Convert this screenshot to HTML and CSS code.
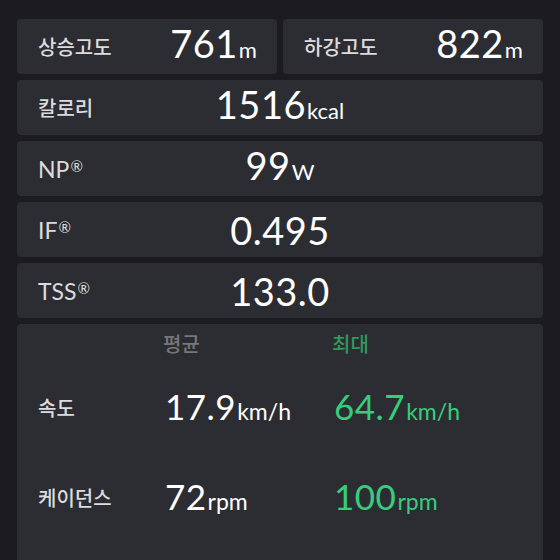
FILE: index.html
```html
<!DOCTYPE html>
<html lang="ko">
<head>
    <meta charset="UTF-8">
    <title>Ride Summary</title>
    <link rel="stylesheet" href="styles.css">
</head>
<body>
    <div class="stats">
        <div class="pair">
            <div class="card half">
                <span class="label">상승고도</span>
                <span class="value">761<small>m</small></span>
            </div>
            <div class="card half">
                <span class="label">하강고도</span>
                <span class="value">822<small>m</small></span>
            </div>
        </div>
        <div class="card full">
            <span class="label">칼로리</span>
            <span class="value">1516<small>kcal</small></span>
        </div>
        <div class="card full">
            <span class="label latin">NP<sup>®</sup></span>
            <span class="value">99<small>W</small></span>
        </div>
        <div class="card full">
            <span class="label latin">IF<sup>®</sup></span>
            <span class="value">0.495</span>
        </div>
        <div class="card full">
            <span class="label latin">TSS<sup>®</sup></span>
            <span class="value">133.0</span>
        </div>

        <!-- average / max table -->
        <div class="card table">
            <span></span>
            <span class="head avg">평균</span>
            <span class="head max">최대</span>

            <span class="label">속도</span>
            <span class="value sm">17.9<small>km/h</small></span>
            <span class="value sm green">64.7<small>km/h</small></span>

            <span class="label">케이던스</span>
            <span class="value sm">72<small>rpm</small></span>
            <span class="value sm green">100<small>rpm</small></span>
        </div>
    </div>
</body>
</html>
```

FILE: styles.css
```css
body {
    margin: 0;
    background-color: #1c1c20;
    font-family: "Noto Sans CJK KR", "Noto Sans", sans-serif;
    color: #fff;
    overflow: hidden;
}

.stats {
    display: flex;
    flex-direction: column;
    gap: 6px;
    padding: 19px 17px 0 17px;
}

.pair {
    display: flex;
    gap: 6px;
}

.card {
    background-color: #2c2d33;
    border-radius: 4px;
    height: 55px;
    display: grid;
    align-items: center;
}

.half {
    flex: 1;
    grid-template-columns: 133px 1fr;
}

.full {
    grid-template-columns: 1fr auto 1fr;
}

.label {
    padding-left: 21px;
    font-size: 20px;
    font-weight: 500;
    color: #dcdcde;
    line-height: 24px;
}

.label.latin {
    font-family: "Lato", "Noto Sans", sans-serif;
    font-size: 23px;
    font-weight: 400;
}

.label sup {
    font-size: 15px;
    vertical-align: 6px;
    line-height: 0;
    margin-left: 1px;
}

.value {
    justify-self: center;
    font-family: "Lato", "Noto Sans", sans-serif;
    font-size: 38px;
    line-height: 44px;
    color: #fff;
    letter-spacing: 0.5px;
}

.value small {
    font-size: 22px;
    letter-spacing: 0;
    margin-left: 1px;
}

.table {
    height: auto;
    grid-template-columns: 146px 169px 1fr;
    grid-template-rows: 31px 90px 90px 40px;
    align-items: center;
    padding-top: 8px;
}

.table .head {
    align-self: start;
    font-size: 20px;
    font-weight: 500;
    line-height: 24px;
}

.head.avg {
    color: #76767b;
}

.head.max {
    color: #2e9a5b;
}

.value.sm {
    justify-self: start;
    font-size: 35px;
    margin-left: 2px;
}

.value.sm small {
    font-size: 23px;
}

.green {
    color: #37cd7c;
}
```
